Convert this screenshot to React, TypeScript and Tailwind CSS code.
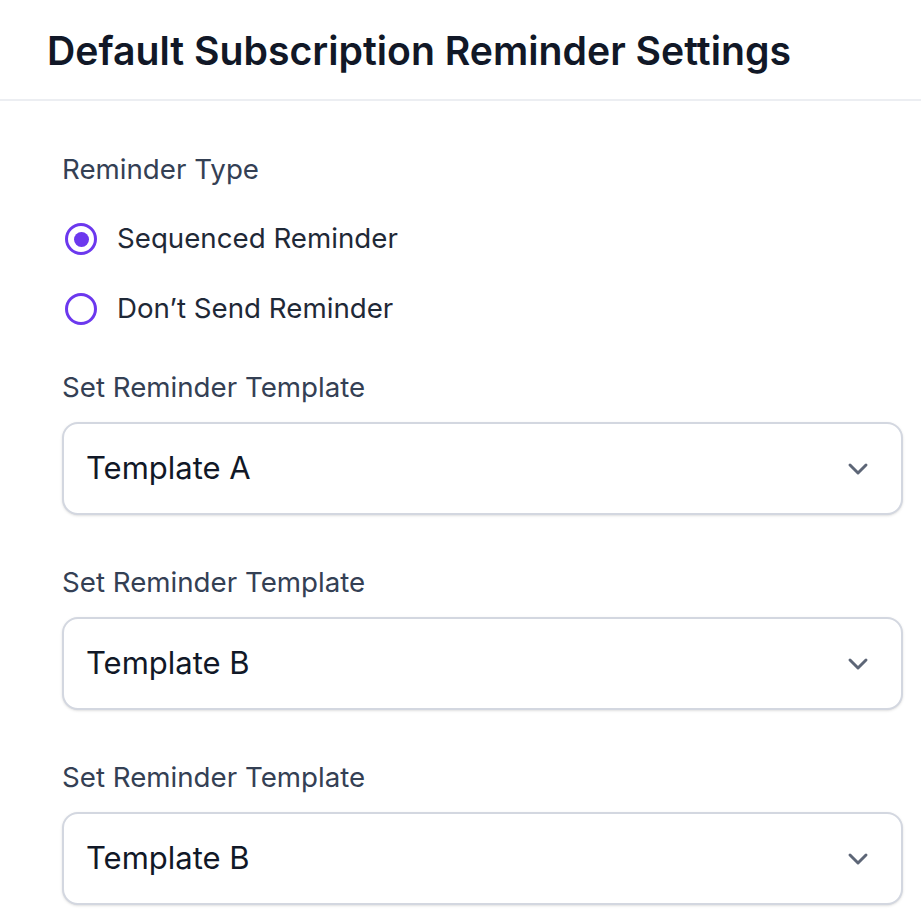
import React, { useState } from "react";

const templates = ["Template A", "Template B", "Template B"];

function Chevron() {
  return (
    <svg width="32" height="32" viewBox="0 0 24 24" fill="none" className="text-[#5d6677]">
      <path d="M6 9l6 6 6-6" stroke="currentColor" strokeWidth="2.2" strokeLinecap="round" strokeLinejoin="round" />
    </svg>
  );
}

function Radio({ checked, label, onClick }: { checked: boolean; label: string; onClick: () => void }) {
  return (
    <button type="button" onClick={onClick} className="flex items-center gap-[20px] h-[40px] text-left">
      <span className="ml-[3px] w-[32px] h-[32px] rounded-full border-[3.5px] border-[#6c38ee] flex items-center justify-center bg-white">
        {checked && <span className="w-[15px] h-[15px] rounded-full bg-[#6c38ee]" />}
      </span>
      <span className="text-[27.7px] text-[#1f2937]">{label}</span>
    </button>
  );
}

export default function App() {
  const [type, setType] = useState("sequenced");

  return (
    <div className="w-[921px] h-[924px] bg-white overflow-hidden" style={{ fontFamily: "Inter, 'Noto Sans', sans-serif" }}>
      <div className="h-[101px] border-b-2 border-[#eceef2] pl-[47px] pt-[25px]">
        <h1 className="text-[39.2px] leading-[52px] font-semibold text-[#111827]">
          Default Subscription Reminder Settings
        </h1>
      </div>

      <div className="pl-[62px] pr-[18px] pt-[48px]">
        <p className="text-[27.7px] leading-[40px] text-[#344054]">Reminder Type</p>

        <div className="mt-[30px] flex flex-col gap-[30px]">
          <Radio checked={type === "sequenced"} label="Sequenced Reminder" onClick={() => setType("sequenced")} />
          <Radio checked={type === "none"} label="Don’t Send Reminder" onClick={() => setType("none")} />
        </div>

        <div className="mt-[38px] flex flex-col gap-[47px]">
          {templates.map((t, i) => (
            <div key={i}>
              <p className="text-[27.7px] leading-[40px] text-[#344054]">Set Reminder Template</p>
              <div className="mt-[15px] h-[93px] rounded-[16px] border-2 border-[#d3d7e0] shadow-sm bg-white flex items-center justify-between pl-[22px] pr-[27px]">
                <span className="text-[31px] text-[#111827]">{t}</span>
                <Chevron />
              </div>
            </div>
          ))}
        </div>
      </div>
    </div>
  );
}
